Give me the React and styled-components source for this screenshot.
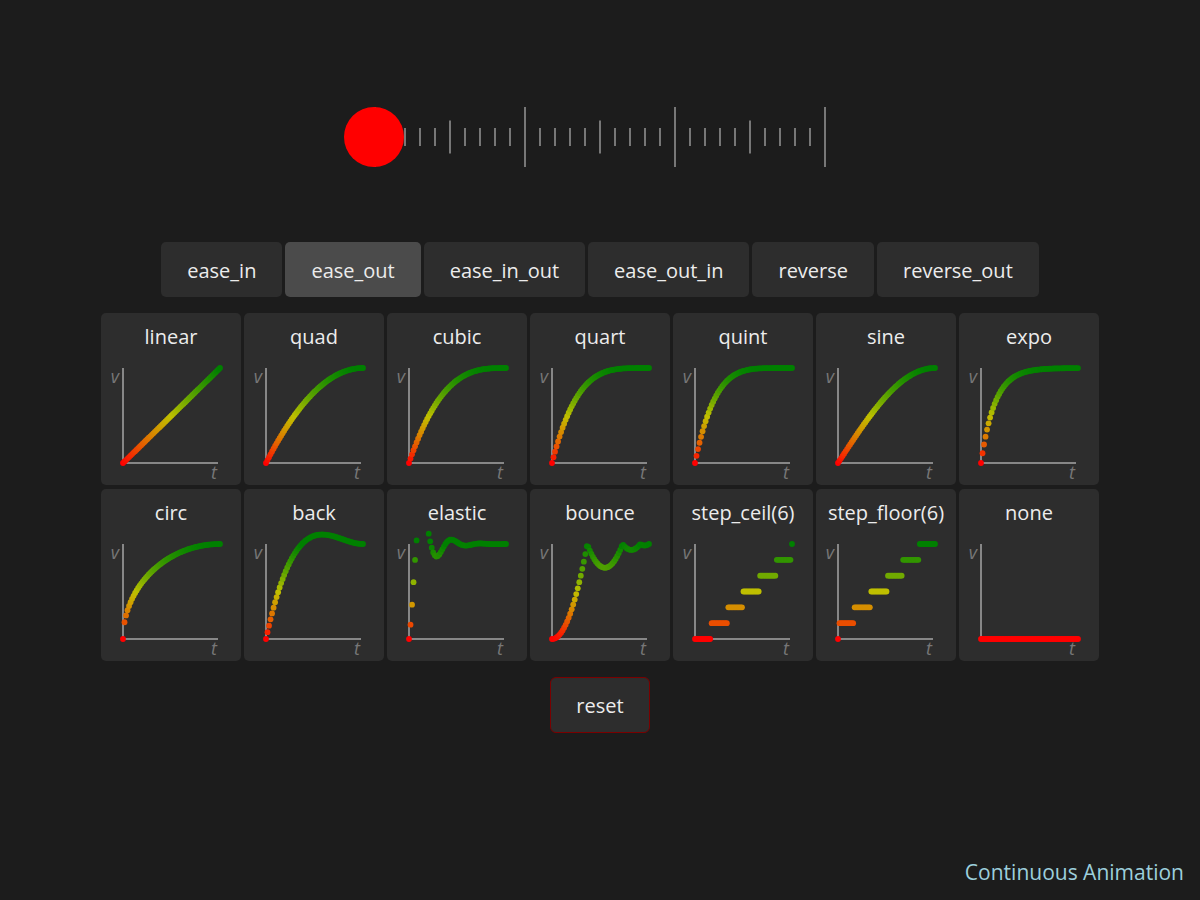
import React, { useState } from 'react'
import styled, { createGlobalStyle } from 'styled-components'

const GlobalStyle = createGlobalStyle`
  html, body {
    margin: 0;
    padding: 0;
    background: #1c1c1c;
  }
  body {
    font-family: "Open Sans", "Noto Sans", sans-serif;
    color: #ececec;
  }
`

const Page = styled.div`
  min-height: 900px;
  box-sizing: border-box;
  display: flex;
  flex-direction: column;
  align-items: center;
  padding-top: 107px;
`

const Ruler = styled.div`
  position: relative;
  width: 452px;
  height: 60px;
`

const Knob = styled.div`
  position: absolute;
  left: -30px;
  top: 0;
  width: 60px;
  height: 60px;
  border-radius: 50%;
  background: #ff0000;
`

const ModeBar = styled.div`
  display: flex;
  gap: 3px;
  margin-top: 75px;
`

const ModeButton = styled.button`
  height: 55px;
  padding: 0 26px;
  border: 0;
  border-radius: 5px;
  background: ${p => (p.$active ? '#4b4b4b' : '#2d2d2d')};
  color: #ececec;
  font-family: inherit;
  font-size: 20px;
  padding-top: 2px;
  cursor: pointer;
`

const Grid = styled.div`
  display: grid;
  grid-template-columns: repeat(7, 140px);
  column-gap: 3px;
  row-gap: 4px;
  margin-top: 16px;
`

const Card = styled.div`
  height: 172px;
  background: #2d2d2d;
  border-radius: 5px;
  display: flex;
  flex-direction: column;
  align-items: center;
  overflow: hidden;
`

const CardTitle = styled.div`
  height: 40px;
  box-sizing: border-box;
  padding-top: 10px;
  line-height: 28px;
  font-size: 20px;
  color: #ececec;
`

const ResetButton = styled.button`
  margin-top: 16px;
  width: 100px;
  height: 56px;
  border: 1px solid #7a0000;
  border-radius: 6px;
  background: #2d2d2d;
  color: #ececec;
  font-family: inherit;
  font-size: 20px;
  cursor: pointer;
`

const Footer = styled.div`
  margin-top: auto;
  align-self: flex-end;
  padding: 0 16px 14px 0;
  line-height: 28px;
  font-size: 21px;
  color: #9ccfdc;
`

const modes = ['ease_in', 'ease_out', 'ease_in_out', 'ease_out_in', 'reverse', 'reverse_out']

const c1 = 1.70158
const c3 = c1 + 1
const c4 = (2 * Math.PI) / 3

const bounce = t => {
  const n1 = 7.5625
  const d1 = 2.75
  if (t < 1 / d1) return n1 * t * t
  if (t < 2 / d1) return n1 * (t -= 1.5 / d1) * t + 0.75
  if (t < 2.5 / d1) return n1 * (t -= 2.25 / d1) * t + 0.9375
  return n1 * (t -= 2.625 / d1) * t + 0.984375
}

const easings = [
  ['linear', t => t],
  ['quad', t => 1 - Math.pow(1 - t, 2)],
  ['cubic', t => 1 - Math.pow(1 - t, 3)],
  ['quart', t => 1 - Math.pow(1 - t, 4)],
  ['quint', t => 1 - Math.pow(1 - t, 5)],
  ['sine', t => Math.sin((t * Math.PI) / 2)],
  ['expo', t => (t === 0 ? 0 : 1 - Math.pow(2, -10 * t))],
  ['circ', t => Math.sqrt(1 - Math.pow(t - 1, 2))],
  ['back', t => 1 + c3 * Math.pow(t - 1, 3) + c1 * Math.pow(t - 1, 2)],
  ['elastic', t => (t === 0 ? 0 : t === 1 ? 1 : Math.pow(2, -10 * t) * Math.sin((t * 10 - 0.75) * c4) + 1)],
  ['bounce', bounce],
  ['step_ceil(6)', t => (t >= 1 ? 1 : Math.floor(t * 6) / 6)],
  ['step_floor(6)', t => Math.ceil(t * 6) / 6],
  ['none', () => 0],
]

// red -> yellow -> green, darkening as it goes
const dotColor = v => {
  const k = Math.min(1, Math.max(0, v))
  const h = 120 * k
  const val = 1 - 0.5 * k
  const x = val * (1 - Math.abs(((h / 60) % 2) - 1))
  const [r, g] = h < 60 ? [val, x] : [x, val]
  return `rgb(${Math.round(r * 255)},${Math.round(g * 255)},0)`
}

const SAMPLES = 64

const Plot = ({ fn }) => {
  const dots = []
  for (let i = 0; i <= SAMPLES; i++) {
    const t = i / SAMPLES
    const v = fn(t)
    dots.push(<circle key={i} cx={22 + t * 97} cy={110 - v * 95} r={2.9} fill={dotColor(v)} />)
  }
  return (
    <svg width="140" height="132" viewBox="0 0 140 132">
      <line x1="22" y1="15" x2="22" y2="111" stroke="#878787" strokeWidth="2" />
      <line x1="21" y1="110" x2="117" y2="110" stroke="#878787" strokeWidth="2" />
      <text x="14" y="30" fontSize="18" fontStyle="italic" fill="#777" textAnchor="middle" fontFamily="Open Sans, sans-serif">v</text>
      <text x="113" y="126" fontSize="18" fontStyle="italic" fill="#777" textAnchor="middle" fontFamily="Open Sans, sans-serif">t</text>
      {dots}
    </svg>
  )
}

const Ticks = () => {
  const ticks = []
  for (let i = 0; i <= 30; i++) {
    const h = i % 10 === 0 ? 60 : i % 5 === 0 ? 33 : 18
    ticks.push(<rect key={i} x={i * 15} y={30 - h / 2} width="2" height={h} fill="#777" />)
  }
  return (
    <svg width="452" height="60" viewBox="0 0 452 60">
      {ticks}
    </svg>
  )
}

const App = () => {
  const [mode, setMode] = useState('ease_out')
  return (
    <Page>
      <GlobalStyle />
      <Ruler>
        <Ticks />
        <Knob />
      </Ruler>
      <ModeBar>
        {modes.map(m => (
          <ModeButton key={m} $active={m === mode} onClick={() => setMode(m)}>
            {m}
          </ModeButton>
        ))}
      </ModeBar>
      <Grid>
        {easings.map(([name, fn]) => (
          <Card key={name}>
            <CardTitle>{name}</CardTitle>
            <Plot fn={fn} />
          </Card>
        ))}
      </Grid>
      <ResetButton>reset</ResetButton>
      <Footer>Continuous Animation</Footer>
    </Page>
  )
}

export default App
